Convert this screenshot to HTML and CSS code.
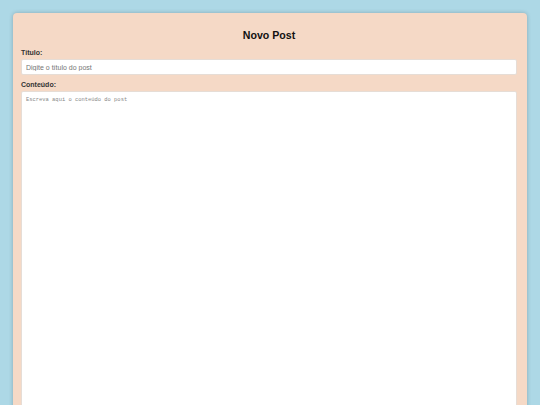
FILE: index.html
```html
<!DOCTYPE html>
<html lang="pt">
<head>
<meta charset="utf-8">
<title>Novo Post</title>
<link rel="stylesheet" href="styles.css">
</head>
<body>
<main class="card">
  <h2 class="card-title">Novo Post</h2>
  <form class="post-form">
    <label class="field-label" for="titulo">Título:</label>
    <input class="field-input" id="titulo" type="text" placeholder="Digite o título do post">
    <label class="field-label" for="conteudo">Conteúdo:</label>
    <textarea class="field-textarea" id="conteudo" placeholder="Escreva aqui o conteúdo do post"></textarea>
  </form>
</main>
</body>
</html>
```

FILE: styles.css
```css
html, body {
  margin: 0;
  padding: 0;
  background: #add8e6;
  overflow: hidden;
}

body {
  font-family: "Liberation Sans", Arial, sans-serif;
}

.card {
  margin: 13px 13px 0 13px;
  padding: 8px 10px 0 8px;
  background: #f5d9c6;
  border-radius: 4px;
  box-shadow: 0 0 4px rgba(0, 0, 0, 0.22);
  height: 420px;
  box-sizing: border-box;
}

.card-title {
  margin: 8px 0 7px;
  text-align: center;
  font-size: 10.6px;
  line-height: 12px;
  font-weight: bold;
  color: #111;
}

.post-form {
  display: flex;
  flex-direction: column;
}

.field-label {
  display: block;
  font-size: 7px;
  line-height: 9px;
  font-weight: bold;
  color: #333;
  margin-bottom: 2px;
}

.field-input {
  box-sizing: border-box;
  width: 100%;
  height: 16px;
  margin: 0 0 5px;
  padding: 0 4px;
  border: 1px solid #e6ddd6;
  border-radius: 2px;
  background: #fff;
  font-family: "Liberation Sans", Arial, sans-serif;
  font-size: 7px;
  color: #333;
  outline: none;
}

.field-input::placeholder {
  color: #757575;
}

.field-input + .field-label {
  margin-bottom: 2px;
}

.field-textarea {
  box-sizing: border-box;
  width: 100%;
  height: 400px;
  margin: 0;
  padding: 4px 4px;
  border: 1px solid #e6ddd6;
  border-radius: 2px;
  background: #fff;
  font-family: "Liberation Mono", "Courier New", monospace;
  font-size: 5.45px;
  line-height: 7px;
  color: #333;
  resize: none;
  outline: none;
}

.field-textarea::placeholder {
  color: #888;
}
```
